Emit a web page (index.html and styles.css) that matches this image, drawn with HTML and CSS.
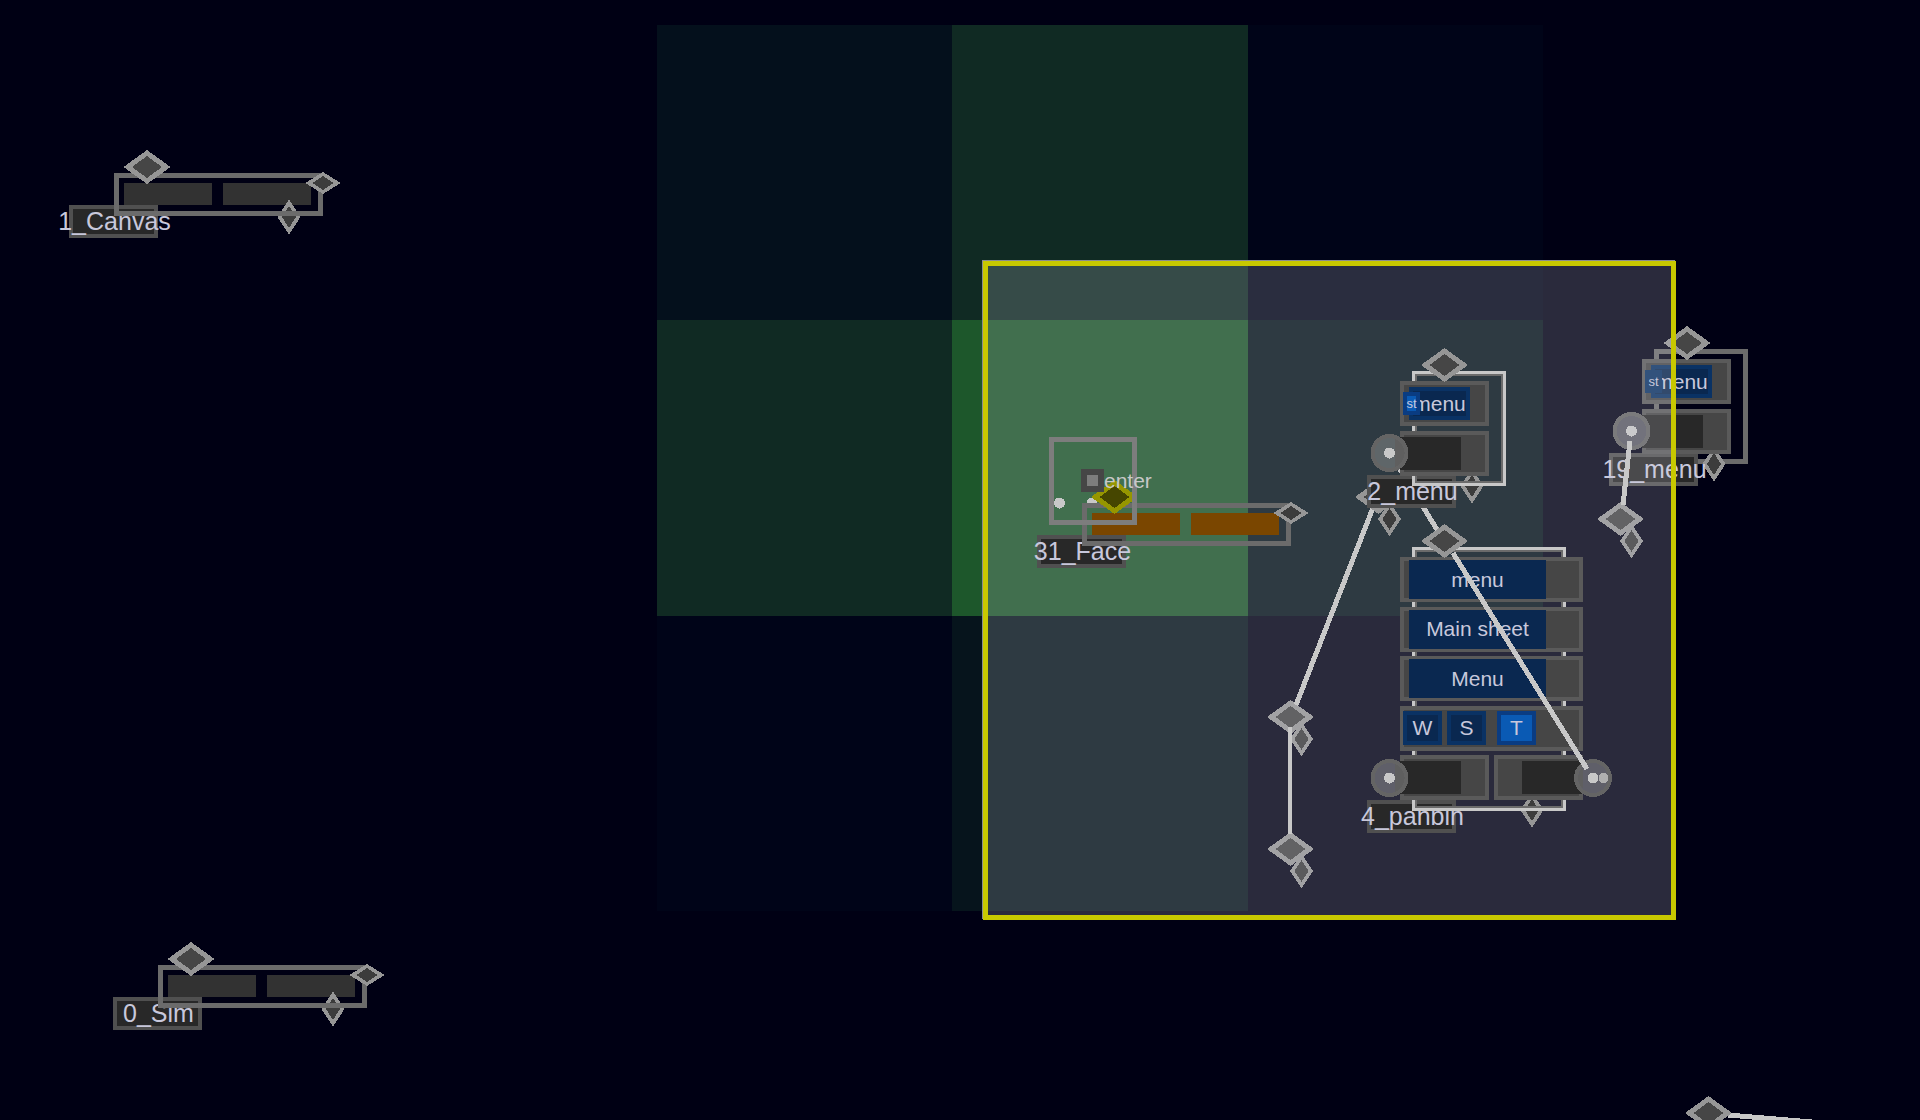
FILE: index.html
```html
<!DOCTYPE html>
<html lang="en">
<head>
<meta charset="utf-8">
<meta name="viewport" content="width=device-width, initial-scale=1">
<title>Canvas</title>
<link rel="stylesheet" href="styles.css">
</head>
<body>
<svg class="defs" aria-hidden="true">
  <defs>
    <g id="d-main"><path class="edge" d="M-23.5 0 0-17 23.5 0 0 17Z"/><path class="core" d="M-15 0 0-11 15 0 0 11Z"/></g>
    <g id="d-wide"><path class="edge" d="M-17.5 0 0-11 17.5 0 0 11Z"/><path class="core-dark" d="M-10.5 0 0-7 10.5 0 0 7Z"/></g>
    <g id="d-tall"><path class="edge" d="M-11.5 0 0-17.5 11.5 0 0 17.5Z"/><path class="core-dark" d="M-7 0 0-11 7 0 0 11Z"/></g>
  </defs>
</svg>
<main class="canvas">
  <div class="cells">
    <i class="c1"></i><i class="c2"></i><i class="c3"></i>
    <i class="c2"></i><i class="c4"></i><i class="c5"></i>
    <i class="c3"></i><i class="c5"></i><i></i>
  </div>

  <section class="node strip at-canvas">
    <div class="label"><span>1_Canvas</span></div>
    <div class="bars"><i></i><i></i></div>
    <svg class="marks"><use href="#d-tall" x="175" y="44"/></svg>
    <div class="frame"></div>
    <svg class="marks"><use href="#d-main" x="33" y="-6"/><use href="#d-wide" x="209" y="10"/></svg>
  </section>

  <section class="node strip at-sim">
    <div class="label"><span>0_Sim</span></div>
    <div class="bars"><i></i><i></i></div>
    <svg class="marks"><use href="#d-tall" x="175" y="44"/></svg>
    <div class="frame"></div>
    <svg class="marks"><use href="#d-main" x="33" y="-6"/><use href="#d-wide" x="209" y="10"/></svg>
  </section>

  <section class="node menu dim at-menu19">
    <div class="frame"></div>
    <svg class="marks"><use href="#d-tall" x="60" y="115"/></svg>
    <div class="label"><span>19_menu</span></div>
    <div class="stack">
      <div class="row"><button class="short">menu</button><button class="tag">st</button></div>
      <div class="row"><i class="slot"></i></div>
    </div>
    <svg class="marks">
      <use href="#d-main" x="33" y="-6"/>
      <g class="port port-a"><circle class="ring" cx="-22.5" cy="82" r="17"/><circle class="dot" cx="-22.5" cy="82" r="5.5"/></g>
    </svg>
  </section>

  <svg class="layer">
    <use href="#d-main" x="1620.5" y="519"/><use href="#d-tall" x="1631.5" y="541"/>
    <use href="#d-main" x="1290.5" y="717"/><use href="#d-tall" x="1301.5" y="739"/>
    <use href="#d-main" x="1290.5" y="849"/><use href="#d-tall" x="1301.5" y="871"/>
  </svg>

  <div class="selection"></div>

  <svg class="layer">
    <path class="wire" d="M1378 495 1296 705M1390 453 1444 541"/>
    <path class="wire upright" d="M1290 727V834"/>
    <use href="#d-main" x="1378.5" y="497"/><use href="#d-tall" x="1389.5" y="519"/>
    <path class="wire" d="M1728 1115 1920 1131"/>
    <use href="#d-main" x="1708.5" y="1113"/>
  </svg>

  <section class="node strip face at-face">
    <div class="label"><span>31_Face</span></div>
    <div class="bars"><i></i><i></i></div>
    <svg class="marks"><circle class="dot" cx="-22.5" cy="0" r="5.5"/><circle class="dot" cx="10" cy="0" r="5.5"/></svg>
    <div class="frame"></div>
    <svg class="marks"><g class="picked"><use href="#d-main" x="32.5" y="-6"/></g><use href="#d-wide" x="209" y="10"/></svg>
    <div class="face-box"></div>
    <label class="enter"><input type="checkbox">enter</label>
  </section>

  <section class="node menu lit at-menu2">
    <svg class="marks"><use href="#d-tall" x="60" y="115"/></svg>
    <div class="label"><span>2_menu</span></div>
    <div class="frame"></div>
    <div class="stack">
      <div class="row"><button class="short">menu</button><button class="tag">st</button></div>
      <div class="row"><i class="slot"></i></div>
    </div>
    <svg class="marks">
      <use href="#d-main" x="32.5" y="-6"/>
      <g class="port port-b"><circle class="ring" cx="-22.5" cy="82" r="17"/><path class="shade" d="M-17 68a15 15 0 0 1 0 28Z"/><circle class="dot" cx="-22.5" cy="82" r="5.5"/></g>
    </svg>
  </section>

  <section class="node panbin lit at-panbin">
    <svg class="marks"><use href="#d-tall" x="120" y="263"/></svg>
    <div class="label"><span>4_panbin</span></div>
    <div class="frame"></div>
    <div class="stack">
      <div class="row"><button class="long">menu</button></div>
      <div class="row"><button class="long">Main sheet</button></div>
      <div class="row"><button class="long">Menu</button></div>
      <div class="row keys"><button class="key">W</button><button class="key">S</button><button class="key on">T</button></div>
      <div class="pair">
        <div class="row"><i class="slot"></i></div>
        <div class="row end"><i class="slot"></i></div>
      </div>
    </div>
    <svg class="marks">
      <use href="#d-main" x="32.5" y="-6"/>
      <g class="port port-c"><circle class="ring" cx="-22.5" cy="231" r="17"/><path class="shade" d="M-17 217a15 15 0 0 1 0 28Z"/><circle class="dot" cx="-22.5" cy="231" r="5.5"/></g>
      <g class="port port-c"><circle class="ring" cx="181" cy="231" r="17"/><path class="shade" d="M171 220a15 15 0 0 0 0 22Z"/><circle class="dot soft" cx="191.5" cy="231" r="5"/><circle class="dot" cx="181" cy="231" r="5.5"/></g>
    </svg>
  </section>

  <svg class="layer"><path class="wire" d="M1453 553 1587 769M1630 441 1623 505"/></svg>
</main>
</body>
</html>
```

FILE: styles.css
```css
* { box-sizing: border-box; }

body {
  margin: 0;
  background: #000014;
  color: #c8c8dc;
  font-family: "Liberation Sans", Arial, sans-serif;
  font-size: 21px;
}

.canvas {
  position: relative;
  min-height: 100vh;
  overflow: hidden;
}

.defs { position: absolute; width: 0; height: 0; }

.layer, .marks {
  position: absolute;
  top: 0;
  left: 0;
  width: 100%;
  height: 100%;
  overflow: visible;
  pointer-events: none;
  shape-rendering: crispEdges;
}

.edge { fill: var(--edge, #969696); }
.core { fill: var(--core, #464646); }
.core-dark { fill: #3c3c3c; }
.picked { --edge: #969600; --core: #464600; }
.wire { fill: none; stroke: #c8c8c8; stroke-width: 5; }
.upright { stroke-width: 4; }
.dot { fill: #c8c8c8; }
.soft { fill: #afafaf; }
.ring { stroke: #646464; stroke-width: 4; }
.port-a .ring { fill: #5a5a64; }
.port-b .ring { fill: #5f6669; }
.port-c .ring { fill: #5f5f69; }
.shade { fill: #5f5f5f; }

/* backdrop */
.cells {
  position: absolute;
  left: 657px;
  top: 25px;
  display: grid;
  grid-template: 295px 296px 295px / 295px 296px 295px;
}
.c1 { background: #04101c; }
.c2 { background: #102a23; }
.c3 { background: #000418; }
.c4 { background: #1d572b; }
.c5 { background: #06141c; }

.selection {
  position: absolute;
  left: 983px;
  top: 261px;
  width: 693px;
  height: 659px;
  border: 5px solid #c8c800;
  background: rgba(208, 208, 220, .2) padding-box;
  box-shadow: -1px -1px 0 #8c8c8c;
}

/* nodes on the free canvas */
.node { position: absolute; }
.at-canvas { left: 114px; top: 173px; }
.at-sim { left: 158px; top: 965px; }
.at-face { left: 1082px; top: 503px; }
.at-menu2 { left: 1412px; top: 371px; }
.at-menu19 { left: 1654px; top: 349px; }
.at-panbin { left: 1412px; top: 547px; }
.strip { width: 209px; height: 43px; }
.menu { width: 94px; height: 115px; }
.panbin { width: 154px; height: 264px; }

.frame {
  position: absolute;
  inset: 0;
  border: 5px solid #6b6b6b;
}
.lit .frame {
  border: 3px solid #c8c8c8;
  box-shadow: inset 0 0 0 2px #6b6b6b;
}

.label {
  position: absolute;
  left: -45px;
  bottom: -22px;
  width: 89px;
  height: 33px;
  padding-left: 2px;
  display: flex;
  align-items: center;
  justify-content: center;
  border: 4px solid #505050;
  background: #282828;
  font-size: 25px;
  line-height: 25px;
  white-space: nowrap;
}

.bars { display: flex; gap: 11px; padding: 10px; }
.bars i { width: 88px; height: 22px; background: #323232; }
.face .bars i { background: #7a4600; }

.face-box {
  position: absolute;
  left: -33px;
  top: -66px;
  width: 88px;
  height: 88px;
  border: 5px solid #7d7d7d;
}
.enter {
  position: absolute;
  left: -1px;
  top: -34px;
  display: flex;
  align-items: center;
  color: #c8c8c8;
  line-height: 22px;
}
.enter input {
  appearance: none;
  width: 23px;
  height: 23px;
  margin: 0;
  border: 5px solid #464646;
  background: #7d7d7d;
  box-shadow: inset 0 0 0 1px #464646;
}

.stack {
  position: absolute;
  left: -12px;
  top: 10px;
  width: 89px;
  display: flex;
  flex-direction: column;
  gap: 5px;
}
.panbin .stack { width: 183px; height: 243px; gap: 0; justify-content: space-between; }

.row {
  position: relative;
  height: 45px;
  flex: none;
  border: 4px solid #5a5a5a;
  background: #464646;
  display: flex;
  align-items: center;
}
.pair { display: flex; gap: 5px; }
.pair .row { flex: 1; }

button {
  border: 4px solid #0a3264;
  padding: 0;
  background: #0a2850;
  color: inherit;
  font: inherit;
  line-height: 22px;
}
.short { width: 61px; height: 33px; margin-left: 5px; }
.tag {
  position: absolute;
  left: -1px;
  top: 7px;
  width: 17px;
  height: 23px;
  border-color: #0a3c82;
  background: #0a5ab4;
  font-size: 13px;
  line-height: 14px;
  display: flex;
  align-items: center;
  justify-content: center;
}
.dim .tag { border-color: #0a3264; background: #0a3264; }
.long { width: 137px; height: 39px; margin-left: 5px; border: 0; }
.keys { gap: 5px; }
.key { width: 39px; height: 34px; }
.key:first-child { margin-left: -1px; }
.on { margin-left: 6px; border-color: #0a3c82; background: #0a5ab4; }

.slot { width: 61px; height: 33px; margin-left: -4px; background: #282828; }
.end { justify-content: flex-end; }
.end .slot { margin: 0 -4px 0 0; }
```
